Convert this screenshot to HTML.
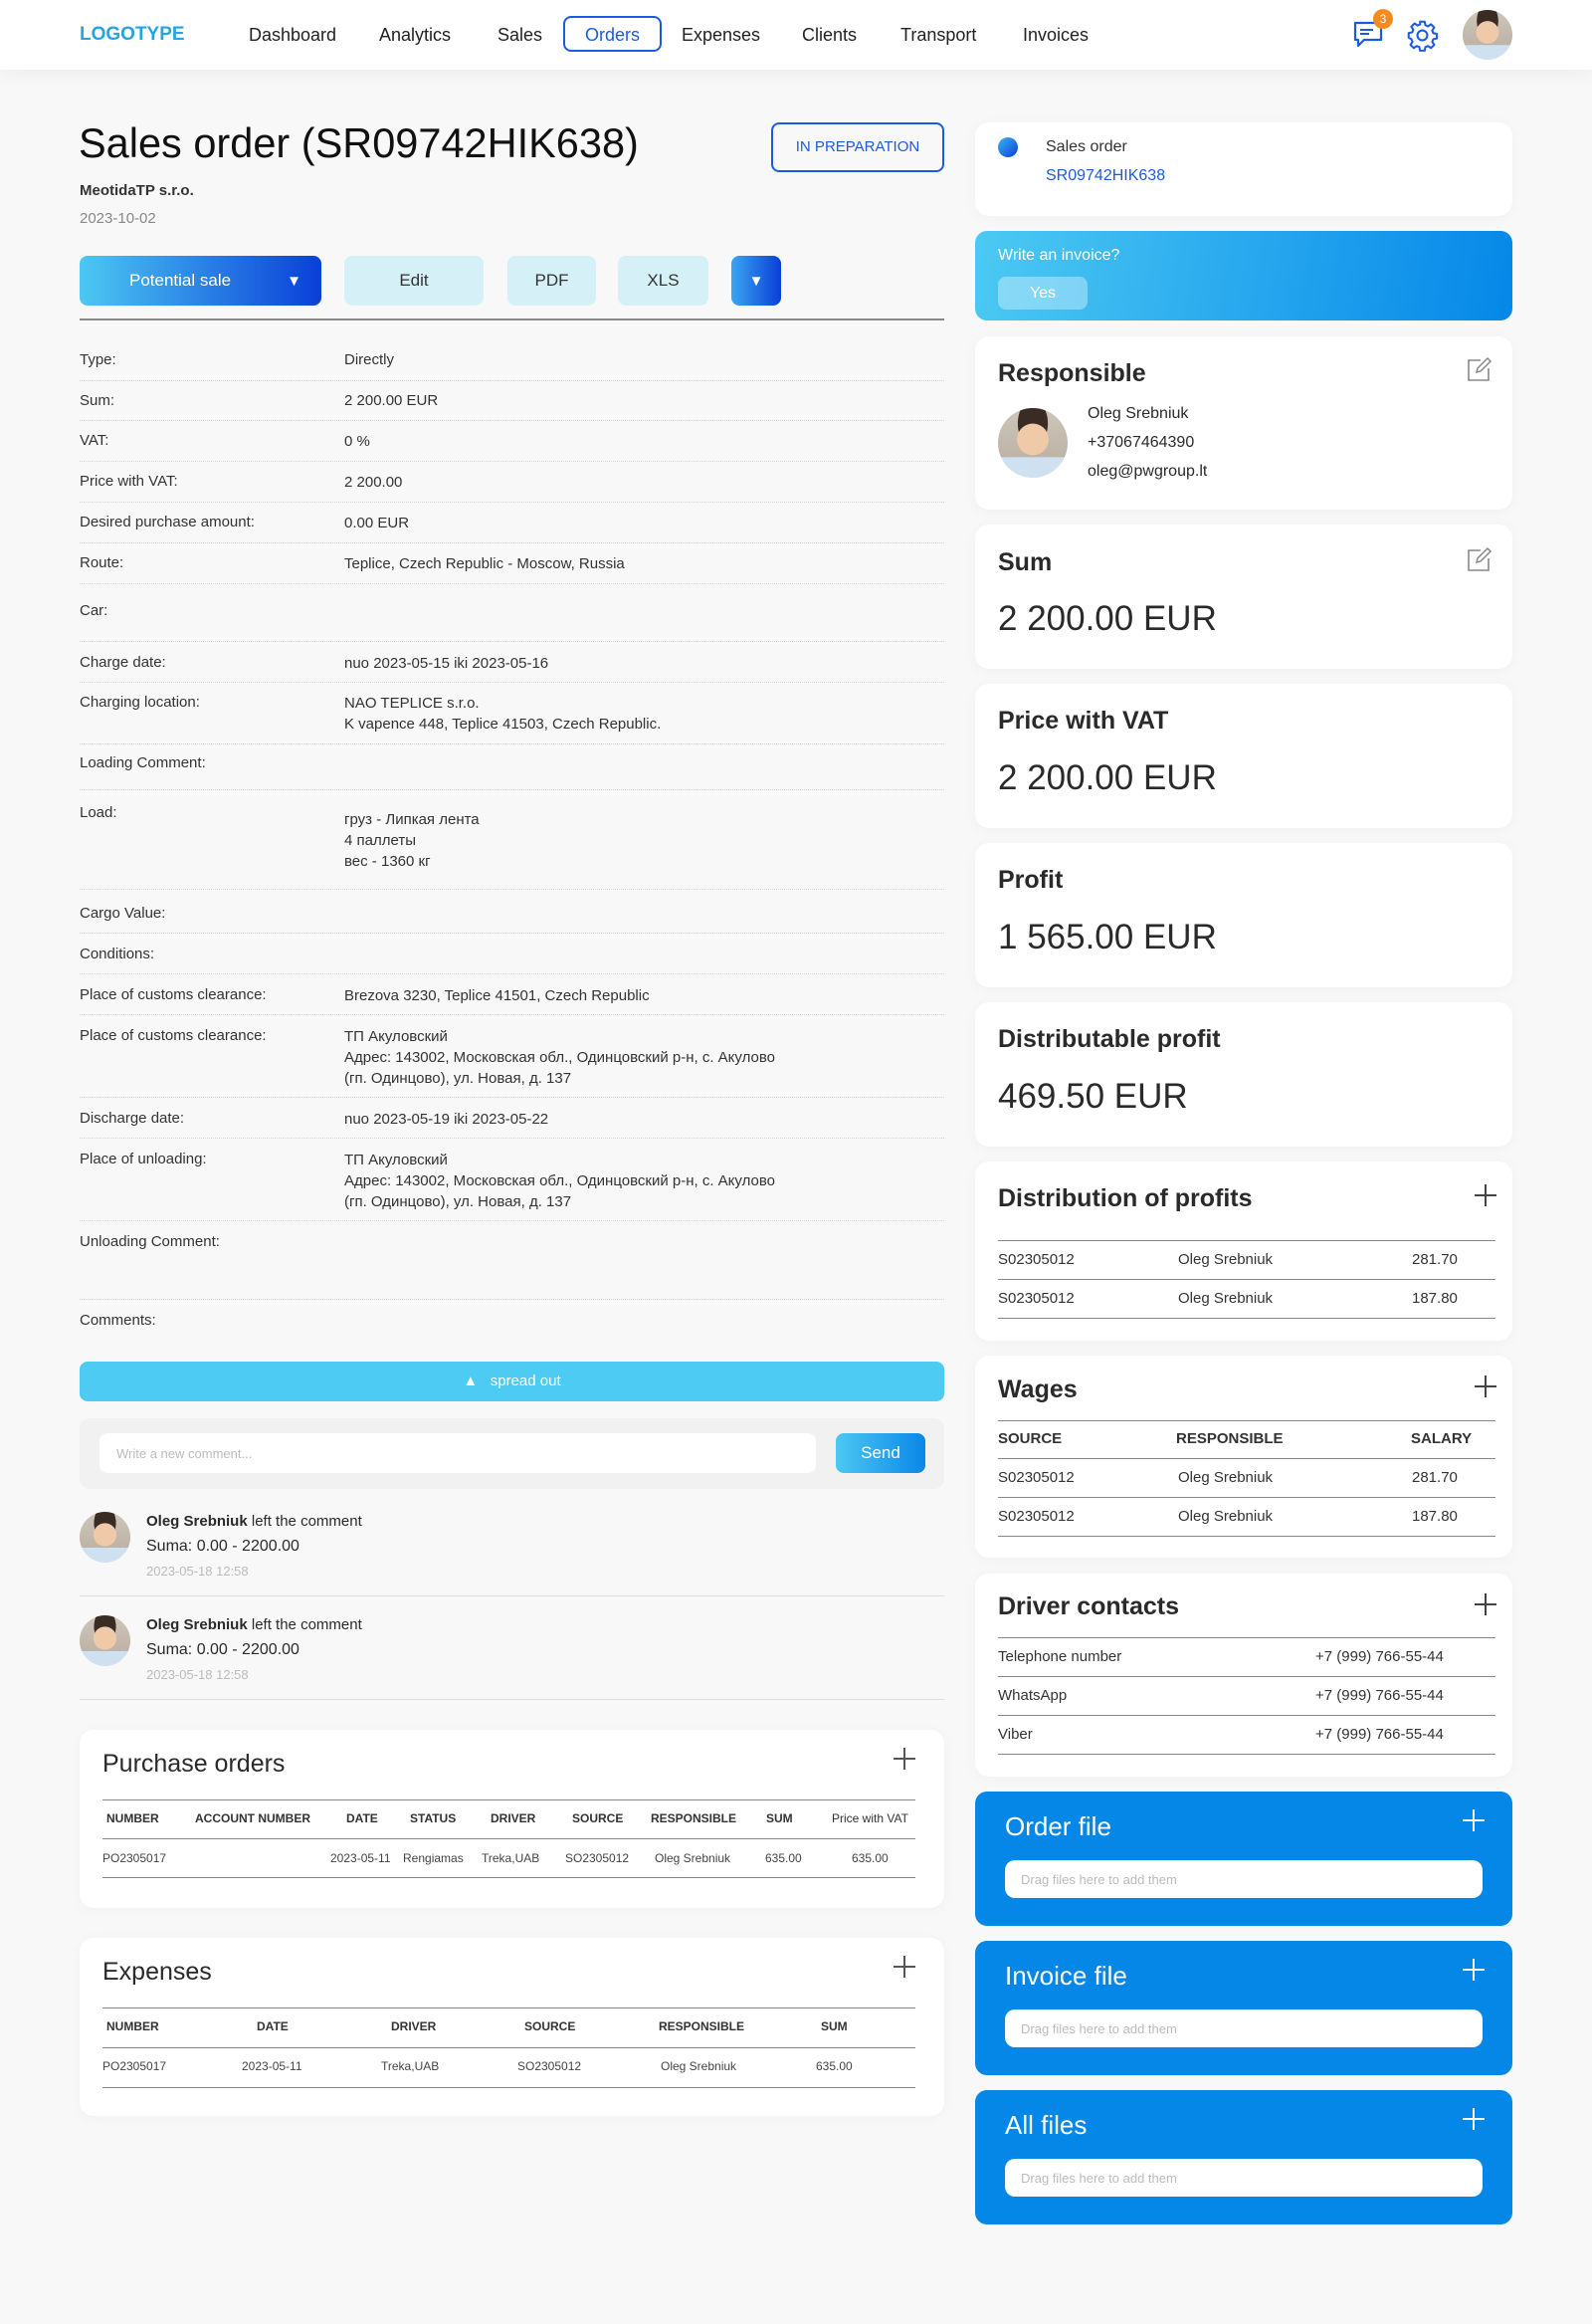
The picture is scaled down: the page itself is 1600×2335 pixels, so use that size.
<!DOCTYPE html>
<html><head><meta charset="utf-8"><style>
*{box-sizing:border-box;margin:0;padding:0}
body{width:1600px;height:2335px;background:#f8f8f8;font-family:"Liberation Sans","Noto Sans CJK SC",sans-serif;color:#2a2a2a;position:relative;overflow:hidden}
.a{position:absolute;white-space:nowrap}
.hdr{position:absolute;left:0;top:0;width:1600px;height:70px;background:#fff;box-shadow:0 4px 18px rgba(0,0,0,.05)}
.nav{position:absolute;top:25px;font-size:18px;color:#222}
.card{position:absolute;background:#fff;border-radius:14px;box-shadow:0 2px 14px rgba(0,0,0,.035)}
.lbl{position:absolute;left:80px;font-size:15px;line-height:20px;color:#333}
.val{position:absolute;left:346px;font-size:15px;line-height:21px;color:#333}
.sep{position:absolute;left:80px;width:869px;border-top:1px dotted #d4d4d4;height:0}
.btn{position:absolute;top:257px;height:50px;border-radius:8px;background:#d6f0f8;font-size:17px;color:#333;display:flex;align-items:center;justify-content:center}
.ct{position:absolute;font-size:25px;font-weight:bold;color:#2a2a2a}
.big{position:absolute;font-size:35px;color:#2a2a2a}
.hl{position:absolute;height:0;border-top:1.5px solid #888}
.sm{position:absolute;font-size:15px;color:#333}
.th{position:absolute;font-size:12px;font-weight:bold;color:#333}
.td{position:absolute;font-size:12px;color:#444}
.plus{position:absolute;width:22px;height:22px}
.plus:before{content:"";position:absolute;left:10px;top:0;width:2px;height:22px;background:currentColor}
.plus:after{content:"";position:absolute;left:0;top:10px;width:22px;height:2px;background:currentColor}
.blue{position:absolute;left:980px;width:540px;height:135px;background:#0587e8;border-radius:12px}
.blue .t{position:absolute;left:30px;top:20px;font-size:26px;color:#fff}
.blue .in{position:absolute;left:30px;top:69px;width:480px;height:38px;background:#fff;border-radius:10px;font-size:13px;color:#bbb;padding:12px 0 0 16px}
.av{position:absolute;border-radius:50%;background:radial-gradient(circle at 50% 45%,#f0c9a8 0 30%,transparent 31%),radial-gradient(ellipse at 50% 22%,#3a2c24 0 30%,transparent 31%),linear-gradient(180deg,#cfc6bb 0,#bdb3a6 70%,#cfe0f0 71%);overflow:hidden}
</style></head><body>

<div class="hdr"></div>
<div class="a" style="left:80px;top:24px;font-size:19px;font-weight:bold;color:#26a3e6">LOGOTYPE</div>
<div class="nav a" style="left:250px">Dashboard</div>
<div class="nav a" style="left:381px">Analytics</div>
<div class="nav a" style="left:500px">Sales</div>
<div class="a" style="left:566px;top:16px;width:99px;height:36px;border:2px solid #1a5ce0;border-radius:8px"></div>
<div class="nav a" style="left:588px;color:#1a5ce0">Orders</div>
<div class="nav a" style="left:685px">Expenses</div>
<div class="nav a" style="left:806px">Clients</div>
<div class="nav a" style="left:905px">Transport</div>
<div class="nav a" style="left:1028px">Invoices</div>
<svg class="a" style="left:1360px;top:20px" width="32" height="30" viewBox="0 0 32 30"><path d="M2 3h26v17H11l-6 6v-6H2z" fill="none" stroke="#1a5ce0" stroke-width="2.2" stroke-linejoin="round"/><path d="M7 10h13M7 14h9" stroke="#1a5ce0" stroke-width="2"/></svg>
<div class="a" style="left:1380px;top:9px;width:20px;height:20px;border-radius:50%;background:#f58a1f;color:#fff;font-size:12px;text-align:center;line-height:20px">3</div>
<svg class="a" style="left:1413px;top:19px" width="33" height="33" viewBox="0 0 24 24"><path d="M10.3 2h3.4l.5 2.6 1.9.8 2.2-1.5 2.4 2.4-1.5 2.2.8 1.9 2.6.5v3.4l-2.6.5-.8 1.9 1.5 2.2-2.4 2.4-2.2-1.5-1.9.8-.5 2.6h-3.4l-.5-2.6-1.9-.8-2.2 1.5-2.4-2.4 1.5-2.2-.8-1.9L2 13.7v-3.4l2.6-.5.8-1.9-1.5-2.2 2.4-2.4 2.2 1.5 1.9-.8z" fill="none" stroke="#1a5ce0" stroke-width="1.5" stroke-linejoin="round"/><circle cx="12" cy="12" r="3.6" fill="none" stroke="#1a5ce0" stroke-width="1.5"/></svg>
<div class="av" style="left:1470px;top:10px;width:50px;height:50px"></div>

<!-- Title -->
<div class="a" style="left:79px;top:120px;font-size:41.5px;color:#111">Sales order (SR09742HIK638)</div>
<div class="a" style="left:80px;top:183px;font-size:15px;font-weight:bold;color:#333">MeotidaTP s.r.o.</div>
<div class="a" style="left:80px;top:211px;font-size:15px;color:#888">2023-10-02</div>
<div class="a" style="left:775px;top:123px;width:174px;height:50px;border:2px solid #1a5ce0;border-radius:8px;color:#1a5ce0;font-size:15px;text-align:center;line-height:46px">IN PREPARATION</div>

<div class="btn" style="left:80px;width:243px;background:linear-gradient(90deg,#4cc8f2,#0a3fd8);color:#fff;justify-content:flex-start;padding-left:50px">Potential sale<span style="position:absolute;right:20px;font-size:15px">▼</span></div>
<div class="btn" style="left:346px;width:140px">Edit</div>
<div class="btn" style="left:510px;width:89px">PDF</div>
<div class="btn" style="left:621px;width:91px">XLS</div>
<div class="btn" style="left:735px;width:50px;background:linear-gradient(90deg,#3aa5f0,#0a3fd8);color:#fff;font-size:15px">▼</div>
<div class="a" style="left:80px;top:320px;width:869px;height:2px;background:#888"></div>

<!-- details -->
<div class="lbl" style="top:352px">Type:</div><div class="val" style="top:351px">Directly</div>
<div class="sep" style="top:382px"></div>
<div class="lbl" style="top:393px">Sum:</div><div class="val" style="top:392px">2 200.00 EUR</div>
<div class="sep" style="top:422px"></div>
<div class="lbl" style="top:433px">VAT:</div><div class="val" style="top:433px">0 %</div>
<div class="sep" style="top:463px"></div>
<div class="lbl" style="top:474px">Price with VAT:</div><div class="val" style="top:474px">2 200.00</div>
<div class="sep" style="top:504px"></div>
<div class="lbl" style="top:515px">Desired purchase amount:</div><div class="val" style="top:515px">0.00 EUR</div>
<div class="sep" style="top:545px"></div>
<div class="lbl" style="top:556px">Route:</div><div class="val" style="top:556px">Teplice, Czech Republic - Moscow, Russia</div>
<div class="sep" style="top:586px"></div>
<div class="lbl" style="top:604px">Car:</div>
<div class="sep" style="top:644px"></div>
<div class="lbl" style="top:656px">Charge date:</div><div class="val" style="top:656px">nuo 2023-05-15 iki 2023-05-16</div>
<div class="sep" style="top:685px"></div>
<div class="lbl" style="top:696px">Charging location:</div><div class="val" style="top:696px">NAO TEPLICE s.r.o.<br>K vapence 448, Teplice 41503, Czech Republic.</div>
<div class="sep" style="top:747px"></div>
<div class="lbl" style="top:757px">Loading Comment:</div>
<div class="sep" style="top:793px"></div>
<div class="lbl" style="top:807px">Load:</div><div class="val" style="top:813px">груз - Липкая лента<br>4 паллеты<br>вес - 1360 кг</div>
<div class="sep" style="top:893px"></div>
<div class="lbl" style="top:908px">Cargo Value:</div>
<div class="sep" style="top:937px"></div>
<div class="lbl" style="top:949px">Conditions:</div>
<div class="sep" style="top:978px"></div>
<div class="lbl" style="top:990px">Place of customs clearance:</div><div class="val" style="top:990px">Brezova 3230, Teplice 41501, Czech Republic</div>
<div class="sep" style="top:1019px"></div>
<div class="lbl" style="top:1031px">Place of customs clearance:</div><div class="val" style="top:1031px">ТП Акуловский<br>Адрес: 143002, Московская обл., Одинцовский р-н, с. Акулово<br>(гп. Одинцово), ул. Новая, д. 137</div>
<div class="sep" style="top:1102px"></div>
<div class="lbl" style="top:1114px">Discharge date:</div><div class="val" style="top:1114px">nuo 2023-05-19 iki 2023-05-22</div>
<div class="sep" style="top:1143px"></div>
<div class="lbl" style="top:1155px">Place of unloading:</div><div class="val" style="top:1155px">ТП Акуловский<br>Адрес: 143002, Московская обл., Одинцовский р-н, с. Акулово<br>(гп. Одинцово), ул. Новая, д. 137</div>
<div class="sep" style="top:1226px"></div>
<div class="lbl" style="top:1238px">Unloading Comment:</div>
<div class="sep" style="top:1305px"></div>
<div class="lbl" style="top:1317px">Comments:</div>

<div class="a" style="left:80px;top:1368px;width:869px;height:40px;background:#4dcbf3;border-radius:8px;color:#fff;font-size:15px;text-align:center;line-height:40px">▲&nbsp;&nbsp;&nbsp;spread out</div>
<div class="a" style="left:80px;top:1425px;width:869px;height:71px;background:#f1f1f1;border-radius:10px"></div>
<div class="a" style="left:100px;top:1440px;width:720px;height:40px;background:#fff;border-radius:8px;font-size:13px;color:#bbb;padding:13px 0 0 17px">Write a new comment...</div>
<div class="a" style="left:840px;top:1440px;width:90px;height:40px;border-radius:8px;background:linear-gradient(90deg,#4cc8f2,#0a87e8);color:#fff;font-size:17px;text-align:center;line-height:40px">Send</div>

<div class="av" style="left:80px;top:1519px;width:51px;height:51px"></div>
<div class="a" style="left:147px;top:1520px;font-size:15px"><b>Oleg Srebniuk</b> left the comment</div>
<div class="a" style="left:147px;top:1545px;font-size:16px">Suma: 0.00 - 2200.00</div>
<div class="a" style="left:147px;top:1571px;font-size:13px;color:#bbb">2023-05-18 12:58</div>
<div class="a" style="left:80px;top:1603px;width:869px;height:1px;background:#ddd"></div>
<div class="av" style="left:80px;top:1623px;width:51px;height:51px"></div>
<div class="a" style="left:147px;top:1624px;font-size:15px"><b>Oleg Srebniuk</b> left the comment</div>
<div class="a" style="left:147px;top:1649px;font-size:16px">Suma: 0.00 - 2200.00</div>
<div class="a" style="left:147px;top:1675px;font-size:13px;color:#bbb">2023-05-18 12:58</div>
<div class="a" style="left:80px;top:1707px;width:869px;height:1px;background:#ddd"></div>

<!-- purchase orders -->
<div class="card" style="left:80px;top:1738px;width:869px;height:179px"></div>
<div class="ct" style="left:103px;top:1758px;font-weight:normal;font-size:25px">Purchase orders</div>
<div class="plus" style="left:898px;top:1756px;color:#555"></div>
<div class="hl" style="left:103px;top:1808px;width:817px"></div>
<div class="th" style="left:107px;top:1820px">NUMBER</div>
<div class="th" style="left:196px;top:1820px">ACCOUNT NUMBER</div>
<div class="th" style="left:348px;top:1820px">DATE</div>
<div class="th" style="left:412px;top:1820px">STATUS</div>
<div class="th" style="left:493px;top:1820px">DRIVER</div>
<div class="th" style="left:575px;top:1820px">SOURCE</div>
<div class="th" style="left:654px;top:1820px">RESPONSIBLE</div>
<div class="th" style="left:770px;top:1820px">SUM</div>
<div class="th" style="left:836px;top:1820px;font-weight:normal">Price with VAT</div>
<div class="hl" style="left:103px;top:1847px;width:817px"></div>
<div class="td" style="left:103px;top:1860px">PO2305017</div>
<div class="td" style="left:332px;top:1860px">2023-05-11</div>
<div class="td" style="left:405px;top:1860px">Rengiamas</div>
<div class="td" style="left:484px;top:1860px">Treka,UAB</div>
<div class="td" style="left:568px;top:1860px">SO2305012</div>
<div class="td" style="left:658px;top:1860px">Oleg Srebniuk</div>
<div class="td" style="left:769px;top:1860px">635.00</div>
<div class="td" style="left:856px;top:1860px">635.00</div>
<div class="hl" style="left:103px;top:1886px;width:817px"></div>

<!-- expenses -->
<div class="card" style="left:80px;top:1947px;width:869px;height:179px"></div>
<div class="ct" style="left:103px;top:1967px;font-weight:normal">Expenses</div>
<div class="plus" style="left:898px;top:1965px;color:#555"></div>
<div class="hl" style="left:103px;top:2017px;width:817px"></div>
<div class="th" style="left:107px;top:2029px">NUMBER</div>
<div class="th" style="left:258px;top:2029px">DATE</div>
<div class="th" style="left:393px;top:2029px">DRIVER</div>
<div class="th" style="left:527px;top:2029px">SOURCE</div>
<div class="th" style="left:662px;top:2029px">RESPONSIBLE</div>
<div class="th" style="left:825px;top:2029px">SUM</div>
<div class="hl" style="left:103px;top:2057px;width:817px"></div>
<div class="td" style="left:103px;top:2069px">PO2305017</div>
<div class="td" style="left:243px;top:2069px">2023-05-11</div>
<div class="td" style="left:383px;top:2069px">Treka,UAB</div>
<div class="td" style="left:520px;top:2069px">SO2305012</div>
<div class="td" style="left:664px;top:2069px">Oleg Srebniuk</div>
<div class="td" style="left:820px;top:2069px">635.00</div>
<div class="hl" style="left:103px;top:2097px;width:817px"></div>

<!-- right column -->
<div class="card" style="left:980px;top:123px;width:540px;height:94px"></div>
<div class="a" style="left:1003px;top:138px;width:20px;height:20px;border-radius:50%;background:linear-gradient(135deg,#3cb6f0,#0a3fd8)"></div>
<div class="a" style="left:1051px;top:139px;font-size:16px;color:#333">Sales order</div>
<div class="a" style="left:1051px;top:168px;font-size:16px;color:#1a5ce0">SR09742HIK638</div>

<div class="a" style="left:980px;top:232px;width:540px;height:90px;border-radius:12px;background:linear-gradient(100deg,#4ccaf3,#0587e8)"></div>
<div class="a" style="left:1003px;top:248px;font-size:16px;color:#fff">Write an invoice?</div>
<div class="a" style="left:1003px;top:278px;width:90px;height:33px;border-radius:8px;background:rgba(255,255,255,.35);color:#fff;font-size:16px;text-align:center;line-height:33px">Yes</div>

<div class="card" style="left:980px;top:338px;width:540px;height:174px"></div>
<div class="ct" style="left:1003px;top:361px">Responsible</div>
<svg class="a" style="left:1474px;top:358px" width="26" height="26" viewBox="0 0 26 26"><path d="M14 4H2v20h20V12" fill="none" stroke="#888" stroke-width="1.6"/><path d="M10 16l1-4 10-10 3 3-10 10z" fill="none" stroke="#888" stroke-width="1.5"/></svg>
<div class="av" style="left:1003px;top:410px;width:70px;height:70px"></div>
<div class="a" style="left:1093px;top:407px;font-size:16px">Oleg Srebniuk</div>
<div class="a" style="left:1093px;top:436px;font-size:16px">+37067464390</div>
<div class="a" style="left:1093px;top:465px;font-size:16px">oleg@pwgroup.lt</div>

<div class="card" style="left:980px;top:527px;width:540px;height:145px"></div>
<div class="ct" style="left:1003px;top:551px">Sum</div>
<svg class="a" style="left:1474px;top:549px" width="26" height="26" viewBox="0 0 26 26"><path d="M14 4H2v20h20V12" fill="none" stroke="#888" stroke-width="1.6"/><path d="M10 16l1-4 10-10 3 3-10 10z" fill="none" stroke="#888" stroke-width="1.5"/></svg>
<div class="big" style="left:1003px;top:602px">2 200.00 EUR</div>

<div class="card" style="left:980px;top:687px;width:540px;height:145px"></div>
<div class="ct" style="left:1003px;top:710px">Price with VAT</div>
<div class="big" style="left:1003px;top:762px">2 200.00 EUR</div>

<div class="card" style="left:980px;top:847px;width:540px;height:145px"></div>
<div class="ct" style="left:1003px;top:870px">Profit</div>
<div class="big" style="left:1003px;top:922px">1 565.00 EUR</div>

<div class="card" style="left:980px;top:1007px;width:540px;height:145px"></div>
<div class="ct" style="left:1003px;top:1030px">Distributable profit</div>
<div class="big" style="left:1003px;top:1082px">469.50 EUR</div>

<div class="card" style="left:980px;top:1167px;width:540px;height:180px"></div>
<div class="ct" style="left:1003px;top:1190px">Distribution of profits</div>
<div class="plus" style="left:1482px;top:1190px;color:#444"></div>
<div class="hl" style="left:1003px;top:1246px;width:500px"></div>
<div class="sm" style="left:1003px;top:1257px">S02305012</div><div class="sm" style="left:1184px;top:1257px">Oleg Srebniuk</div><div class="sm" style="left:1419px;top:1257px">281.70</div>
<div class="hl" style="left:1003px;top:1285px;width:500px"></div>
<div class="sm" style="left:1003px;top:1296px">S02305012</div><div class="sm" style="left:1184px;top:1296px">Oleg Srebniuk</div><div class="sm" style="left:1419px;top:1296px">187.80</div>
<div class="hl" style="left:1003px;top:1324px;width:500px"></div>

<div class="card" style="left:980px;top:1362px;width:540px;height:203px"></div>
<div class="ct" style="left:1003px;top:1382px">Wages</div>
<div class="plus" style="left:1482px;top:1382px;color:#444"></div>
<div class="hl" style="left:1003px;top:1427px;width:500px"></div>
<div class="sm" style="left:1003px;top:1437px;font-weight:bold">SOURCE</div><div class="sm" style="left:1182px;top:1437px;font-weight:bold">RESPONSIBLE</div><div class="sm" style="left:1418px;top:1437px;font-weight:bold">SALARY</div>
<div class="hl" style="left:1003px;top:1465px;width:500px"></div>
<div class="sm" style="left:1003px;top:1476px">S02305012</div><div class="sm" style="left:1184px;top:1476px">Oleg Srebniuk</div><div class="sm" style="left:1419px;top:1476px">281.70</div>
<div class="hl" style="left:1003px;top:1504px;width:500px"></div>
<div class="sm" style="left:1003px;top:1515px">S02305012</div><div class="sm" style="left:1184px;top:1515px">Oleg Srebniuk</div><div class="sm" style="left:1419px;top:1515px">187.80</div>
<div class="hl" style="left:1003px;top:1543px;width:500px"></div>

<div class="card" style="left:980px;top:1581px;width:540px;height:204px"></div>
<div class="ct" style="left:1003px;top:1600px">Driver contacts</div>
<div class="plus" style="left:1482px;top:1601px;color:#444"></div>
<div class="hl" style="left:1003px;top:1645px;width:500px"></div>
<div class="sm" style="left:1003px;top:1656px">Telephone number</div><div class="sm" style="left:1322px;top:1656px">+7 (999) 766-55-44</div>
<div class="hl" style="left:1003px;top:1684px;width:500px"></div>
<div class="sm" style="left:1003px;top:1695px">WhatsApp</div><div class="sm" style="left:1322px;top:1695px">+7 (999) 766-55-44</div>
<div class="hl" style="left:1003px;top:1723px;width:500px"></div>
<div class="sm" style="left:1003px;top:1734px">Viber</div><div class="sm" style="left:1322px;top:1734px">+7 (999) 766-55-44</div>
<div class="hl" style="left:1003px;top:1762px;width:500px"></div>

<div class="blue" style="top:1800px"><div class="t">Order file</div><div class="plus" style="left:490px;top:18px;color:#fff"></div><div class="in">Drag files here to add them</div></div>
<div class="blue" style="top:1950px"><div class="t">Invoice file</div><div class="plus" style="left:490px;top:18px;color:#fff"></div><div class="in">Drag files here to add them</div></div>
<div class="blue" style="top:2100px"><div class="t">All files</div><div class="plus" style="left:490px;top:18px;color:#fff"></div><div class="in">Drag files here to add them</div></div>

</body></html>
